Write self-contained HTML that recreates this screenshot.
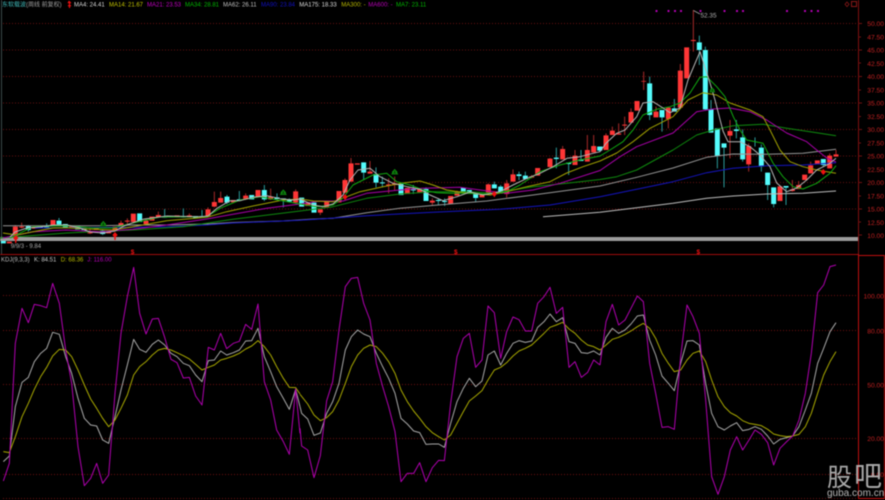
<!DOCTYPE html>
<html lang="zh">
<head>
<meta charset="utf-8">
<title>KDJ</title>
<style>
html,body{margin:0;padding:0;background:#000;width:885px;height:500px;overflow:hidden}
svg{display:block;filter:blur(.45px)}
text{font-family:"Liberation Sans","Noto Sans CJK SC",sans-serif}
.l{fill:none;stroke-width:1;stroke-linejoin:round}
.k{fill:none;stroke-width:3;stroke-linejoin:round}
.rw{fill:none;stroke:#a82828;stroke-width:3}
.cw{fill:none;stroke:#2a9a9a;stroke-width:3}
.rb{fill:none;stroke:#ff3636;stroke-width:15}
.cb{fill:none;stroke:#54fcfc;stroke-width:15}
.ax{fill:#c02020;font-size:6.7px;text-anchor:end}
.t{font-size:6px}
</style>
</head>
<body>
<svg width="885" height="500" viewBox="0 0 885 500" xmlns="http://www.w3.org/2000/svg">
<rect width="885" height="500" fill="#000"/>
<!-- grid -->
<g stroke="#6a1010" stroke-width="1" stroke-dasharray="1 2">
<path d="M3 23.5H858M3 50H858M3 76.5H858M3 103H858M3 129.5H858M3 156H858M3 182.5H858M3 209H858"/>
<path d="M3 295.5H858M3 330.5H858M3 384.5H858M3 438.5H858M3 474.5H858M3 498.5H858" stroke="#701010"/>
</g>
<!-- frame -->
<path d="M1.5 0V254" stroke="#3a4a4a" stroke-width="1"/>
<path d="M858.5 0V254" stroke="#801010" stroke-width="1"/>
<path d="M0 254.5H858" stroke="#a00c0c" stroke-width="1"/>
<path d="M858.5 255.5H884.5V498.5H858.5Z M858.5 254V255" fill="none" stroke="#c01010" stroke-width="1"/>
<path d="M858 23.5h4M858 37h3M858 50h4M858 63h3M858 76.5h4M858 90h3M858 103h4M858 116.5h3M858 129.5h4M858 143h3M858 156h4M858 169.5h3M858 182.5h4M858 196h3M858 209h4M858 222h3M858 235h4" stroke="#701010" stroke-width="1"/>
<!-- gray bar -->
<rect x="0" y="237" width="858" height="4" fill="#9c9c9c"/>

<!-- candles -->
<g transform="matrix(.33333 0 0 .33333 0 130)">
<path class="rw" d="M46 285V318M65 278V295M270 295V312M363 272V290M382 265V285M438 265V285M475 245V262M568 250V262M624 232V258M643 185V232M662 185V218M812 176V210M737 190V210M887 178V220"/>
<path class="cw" d="M85 285V305M140 280V293M177 264V285M308 298V315M494 237V263M550 235V263M606 240V262M681 195V222M718 183V212M793 165V213M831 190V208M850 205V232M868 205V218"/>
<path class="rb" d="M28 335V340M46 290V318M65 290V293M103 290V296M159 270V288M215 287V292M270 303V310M289 295V300M326 305V310M345 290V303M363 279V290M382 272V275M400 251V276M438 272V282M456 260V272M475 255V261M531 256V262M568 256V262M624 238V258M643 216V230M662 204V218M700 210V217M737 197V208M774 180V200M812 200V208M887 184V218"/>
<path class="cb" d="M10 333V340M85 288V300M121 288V293M140 288V292M177 272V283M196 282V292M233 288V298M252 295V300M308 302V312M419 250V276M494 260V263M512 259V262M550 259V262M587 258V265M606 258V261M681 200V218M718 208V212M755 195V208M793 180V208M831 202V207M850 205V208M868 210V215"/>
</g>
<g transform="matrix(.33333 0 0 .33333 300 130)">
<path class="rw" d="M61 238V255M135 145V190M153 84V155M210 93V131M266 145V190M284 140V180M397 205V225M471 182V197M565 160V190M620 150V203M639 118V155M695 135V145M750 84V112M788 48V88M825 60V105M862 15V95M881 15V67"/>
<path class="cw" d="M191 97V150M228 112V172M247 140V172M340 165V192M378 172V213M415 205V225M434 205V228M527 190V217M583 155V175M602 165V190M657 125V150M676 125V147M769 53V115M806 98V135M843 60V93M899 50V65"/>
<path class="rb" d="M23 219V228M61 238V248M80 212V233M117 183V217M135 150V188M153 100V155M172 100V104M210 125V131M266 163V167M284 160V165M322 174V192M359 177V187M397 212V218M452 198V222M471 185V197M546 195V202M565 163V188M620 160V192M639 133V155M695 139V143M713 114V137M750 86V111M788 57V88M825 77V105M862 60V95M881 48V67"/>
<path class="cb" d="M5 203V230M42 218V248M191 97V128M228 132V158M247 157V160M303 162V195M340 178V181M378 177V213M415 210V213M434 213V216M490 173V187M508 180V189M527 190V204M583 163V175M602 170V190M657 133V138M676 137V147M769 83V87M806 98V102M843 88V93M899 50V62"/>
</g>
<g transform="matrix(.33333 0 0 .33333 600 100)">
<path class="rw" d="M18 100V150M37 80V105M56 70V104M74 50V105M93 25V70M390 60V175M446 130V215M540 255V303M577 240V275M596 243V267M632 185V220M689 160V205M708 150V170"/>
<path class="cw" d="M333 0V98M352 85V205M372 130V262M409 60V115M428 88V185M465 112V140M484 133V215M503 218V300M521 262V322M558 258V315M670 177V200"/>
<path class="rb" d="M18 106V150M37 92V105M56 100V104M74 74V77M93 36V68M111 3V32M390 93V107M446 138V193M540 259V303M577 268V273M596 255V267M614 224V240M632 196V220M652 181V193M689 167V205M708 163V170"/>
<path class="cb" d="M0 140V150M333 27V98M352 85V168M372 130V143M409 88V93M428 112V178M484 143V200M503 218V255M521 262V312M558 258V263M670 177V195"/>
</g>
<g transform="matrix(.33333 0 0 .33333 440 0)">
<path class="rw" d="M611 215V270M648 320V352M685 323V385M721 192V323M760 30V155"/>
<path class="cw" d="M629 230V360M666 330V395M703 297V335M778 107V195M796 140V330"/>
<path class="rb" d="M611 243V245M648 335V352M685 323V357M721 212V323M740 142V235M760 120V123"/>
<path class="cb" d="M629 250V345M666 330V352M703 325V335M778 127V150M796 150V328"/>
</g>

<!-- moving averages -->
<polyline class="l" stroke="#bcbcbc" points="543,216.7 600,212.3 636.7,207.7 673,203.3 706.7,198.3 733,196 766.7,194 803,193.3 836,191"/>
<polyline class="l" stroke="#969696" points="3,225.7 100,225.7 133,225 167,225 207,224 233,222.5 283,221 310,219.3 333,218.3 366.7,212.7 400,208.3 450,204 486.7,201 533,195 600,186 636.7,177.3 673,168 706.7,157.3 733,154 766.7,154.3 803,153.3 836,149.3"/>
<polyline class="l" stroke="#1414c0" points="35,228 100,227.5 133,227.3 167,226.7 207,225 233,223 283,221 300,220.3 320,219 366.7,215.7 433,212.3 500,209.3 550,205 600,196.7 636.7,189.3 673,181.7 706.7,172.7 733,168.3 766.7,165.7 803,165 836,162.7"/>
<polyline class="l" stroke="#0e8a0e" points="0,238 66.7,233 133,230 183,226.7 233,219.3 300,211 333,206.7 366.7,198.3 400,194 433,191.7 466.7,191.7 493,193.3 533,186.7 566.7,183.3 600,179.5 616.7,176.7 636.7,170 673,150 696.7,135 713.3,130 733,125.7 763,124.3 786.7,128.3 816.7,132.7 836,135.7"/>
<polyline class="l" stroke="#a800a8" points="3,238 33,231.7 66,230 100,231.7 133,229.3 166.7,225 206.7,219 240,213 266.7,208.3 300,204 320,201 343,201 366.7,193.3 400,190 423,188.3 460,187.3 480,190 506.7,193.3 533,190 560,183.3 600,170.5 620,156.7 636.7,146.7 673,133 696.7,111.7 713,109 730,108 750,111.7 766.7,120 786.7,133 806.7,141.7 816.7,150 826.7,158 836,162"/>
<polyline class="l" stroke="#a0a000" points="3,233 16.7,235 33,231.7 53,228 66.7,227.7 87,229 113,230 133,226.7 166.7,220.7 206.7,217.3 226.7,211.7 253,206 283,200 300,199 313.3,201 333,201.7 346.7,196.7 360,191.7 383,186.7 403,183 420,181 433,185 446.7,190 466.7,193 490,195 506.7,191.7 526.7,186.7 550,181.7 566.7,173 583,166.7 600,161 616.7,153 633,141.7 650,128.3 673,116.7 688,100 703,92.7 716.7,95 730,103 750,110 763,116.7 770,130 780,150 790,161.7 803,166.7 816.7,170 836,173.3"/>
<polyline class="l" stroke="#10a810" points="10,238 33,226.7 66.7,225.7 93,228 113,228 133,223 160,217 206.7,216.7 220,208.3 240,200 260,196.7 300,204 316,206.7 333,205 343,198 353,185 363,180 373,175 386.7,173.3 396.7,181.7 410,185 423,190 436.7,192.7 450,193.3 466.7,193.3 486.7,194 506.7,191.7 520,185 540,171.7 560,165 580,160 600,156 610,150 623,141.7 633,130 643,115 656.7,109.3 670,106.7 680,103 690,93 700,77.3 706.7,76.7 716.7,86.7 725,96.7 733.3,116.7 740,130 746.7,140 763,143.3 773,163 783,176.7 793,186.7 803,189 816.7,183.3 830,173.3 836,165.7"/>
<polyline class="l" stroke="#b4b4b4" points="10,237 15,232 27,228 40,227 53,225 67,225 80,228 90,232 103,233 115,231 124,226 133,222.7 143,219.3 157,217.3 167,216 200,216.7 208,216 217,208.3 230,200.7 240,200.7 253,197.3 267,195.7 280,198.7 293,200 300,199 313,205 323,206.7 333,204 343,195 350,180 358,170 370,168.3 380,176.7 393,183.3 407,186.7 420,189.3 430,195 443,200.7 457,196.7 470,192 483,195 500,191.7 513,185 527,178.3 540,173.3 553,166.7 567,158.3 580,156.7 593,153.3 600,151.7 606,143.3 616.7,133.3 625,130 636.7,116.7 643,103 653,101.7 663,108 670,112.7 680,108 688,80 700,51.7 710,83 715,100 723,131 728,141.7 740,141.7 750,146.7 760,155 770,166.7 776.7,183 786.7,191.7 796.7,188 806.7,180 816.7,170 830,163.3 836,158.3"/>

<!-- buy/sell markers -->
<g fill="#f01010">
<path d="M15.7 235l2.6 3-2.6 3-2.6-3zM115 232l2.6 3-2.6 3-2.6-3zM345 194l2.6 3-2.6 3-2.6-3zM494.300 191l2.600 3-2.600 3-2.600-3zM823.300 169l2.600 3-2.600 3-2.600-3z"/>
<path d="M15 240h1.400v3h-1.400zM114.300 237h1.400v3h-1.400zM494 195h1v2h-1z"/>
</g>
<g fill="#064a06" stroke="#109a10" stroke-width=".8">
<path d="M103.300 221.500l2.200 2.500h-1l1.600 2h-5.600l1.600-2h-1zM283.300 190l2.200 2.500h-1l1.600 2h-5.600l1.600-2h-1zM394.700 169.500l2.200 2.500h-1l1.600 2h-5.600l1.600-2h-1zM712.300 88l1.800 2h-.8l1.300 2h-4.600l1.300-2h-.8z"/>
</g>

<!-- purple dots -->
<g fill="#b000b0">
<rect x="655.500" y="10" width="2" height="2"/><rect x="667.500" y="10" width="2" height="2"/><rect x="674" y="10" width="2" height="2"/><rect x="680" y="10" width="2" height="2"/><rect x="699.500" y="10" width="2" height="2"/><rect x="723.500" y="10" width="2" height="2"/><rect x="736" y="10" width="2" height="2"/><rect x="742" y="10" width="2" height="2"/><rect x="786" y="10" width="2" height="2"/><rect x="804" y="10" width="2" height="2"/><rect x="810.500" y="10" width="2" height="2"/><rect x="817" y="10" width="2" height="2"/>
</g>

<!-- peak label -->
<path d="M693.500 10.500l6.500 3.500" stroke="#a0a0a0" stroke-width=".8" fill="none"/>
<text x="700.500" y="17.500" class="t" fill="#b0b0b0" style="font-size:6.400px">52.35</text>

<!-- top right icons -->
<path d="M847 2l2 2.300-2 2.300-2-2.300z" fill="none" stroke="#8a1818" stroke-width=".8"/>
<rect x="851.500" y="1.500" width="5" height="5" fill="none" stroke="#8a1818" stroke-width="1"/>

<!-- title -->
<text x="2" y="6.500" style="font-size:6px" fill="#3fb6b6">东软载波</text>
<text x="26" y="6.500" style="font-size:6px" fill="#a0a0a0">(周线 前复权)</text>
<path d="M69 .5l2.600 2.600h-1.500v2h1v1.100h-1v1.800h-1.200v-1.800h-1v-1.100h1v-2h-1.500z" fill="#f01010"/>

<!-- MA legend -->
<g class="t">
<text x="74" y="6.700" fill="#d8d8d8" class="t">MA4: 24.41</text>
<text x="109" y="6.700" fill="#c4c400" class="t">MA14: 21.67</text>
<text x="147" y="6.700" fill="#c400c4" class="t">MA21: 23.53</text>
<text x="185" y="6.700" fill="#00b800" class="t">MA34: 28.81</text>
<text x="223" y="6.700" fill="#c0c0c0" class="t">MA62: 26.11</text>
<text x="261" y="6.700" fill="#1010c4" class="t">MA90: 23.84</text>
<text x="299.300" y="6.700" fill="#dcdcdc" class="t">MA175: 18.33</text>
<text x="341.300" y="6.700" fill="#b8b800" class="t">MA300: -</text>
<text x="368.300" y="6.700" fill="#b800b8" class="t">MA600: -</text>
<text x="396" y="6.700" fill="#00b800" class="t">MA7: 23.11</text>
</g>

<!-- low label -->
<text x="10.700" y="248" class="t" fill="#a8a8a8">9/9/3 - 9.84</text>

<!-- year marks -->
<g fill="#f01010" style="font-size:6.500px;font-weight:700" text-anchor="middle">
<text x="132.500" y="254">$</text><text x="455.800" y="254">$</text><text x="698.300" y="254">$</text>
</g>

<!-- KDJ legend -->
<text x="1" y="261.500" class="t" fill="#b8b8b8">KDJ(9,3,3)</text>
<text x="34" y="261.500" class="t" fill="#c8c8c8">K: 84.51</text>
<text x="60.700" y="261.500" class="t" fill="#b8b800">D: 68.36</text>
<text x="87.300" y="261.500" class="t" fill="#b800b8">J: 116.00</text>

<!-- axis labels -->
<g class="ax">
<text x="884" y="26" class="ax">50.00</text><text x="884" y="39.500" class="ax">47.50</text><text x="884" y="52.500" class="ax">45.00</text><text x="884" y="65.800" class="ax">42.50</text><text x="884" y="79" class="ax">40.00</text><text x="884" y="92.500" class="ax">37.50</text><text x="884" y="105.500" class="ax">35.00</text><text x="884" y="119" class="ax">32.50</text><text x="884" y="132" class="ax">30.00</text><text x="884" y="145.300" class="ax">27.50</text><text x="884" y="158.500" class="ax">25.00</text><text x="884" y="172" class="ax">22.50</text><text x="884" y="185" class="ax">20.00</text><text x="884" y="198.500" class="ax">17.50</text><text x="884" y="211.500" class="ax">15.00</text><text x="884" y="225" class="ax">12.50</text><text x="884" y="238" class="ax">10.00</text>
<text x="884" y="298.500" class="ax">100.00</text><text x="884" y="333.500" class="ax">80.00</text><text x="884" y="387.500" class="ax">50.00</text><text x="884" y="441" class="ax">20.00</text><text x="884" y="477" class="ax">0.00</text>
</g>

<!-- KDJ -->
<g transform="matrix(.33333 0 0 .33333 0 250)">
<polyline class="k" stroke="#a8a8a8" points="10,635 28,618 46,470 66,397 85,382 103,335 122,310 140,295 158,247 178,253 197,320 215,370 234,445 253,505 272,525 290,528 308,570 326,580 345,500 363,420 382,345 401,268 419,298 438,307 457,283 475,270 494,285 513,310 531,320 550,340 568,347 587,375 606,395 625,332 643,330 662,303 680,315 700,308 718,300 737,273 755,272 774,235 793,320 812,365 830,410 850,445 868,478 887,418 900,470"/>
<polyline class="k" stroke="#a8a800" points="10,605 28,608 46,560 66,500 85,460 103,418 122,380 140,352 158,318 178,298 197,300 215,320 234,360 253,405 272,447 290,475 308,505 326,530 345,510 363,475 382,435 401,375 419,350 438,335 457,315 475,300 494,295 513,300 531,308 550,317 568,327 587,343 606,360 625,352 643,345 662,330 680,325 700,318 718,310 737,297 755,288 774,272 793,290 812,315 830,350 850,385 868,412 887,413 900,432"/>
<polyline class="k" stroke="#b000b0" points="10,693 28,640 46,280 66,175 85,218 103,163 122,167 140,173 158,100 178,160 197,300 215,400 234,590 253,707 272,685 290,640 308,700 326,675 345,430 363,250 382,140 401,52 419,190 438,252 457,207 475,205 494,262 513,328 531,338 550,384 568,382 587,438 606,465 625,292 643,300 662,250 680,296 700,280 718,274 737,223 755,238 774,162 793,395 812,450 830,540 850,575 868,613 887,417 900,550"/>
</g>
<g transform="matrix(.33333 0 0 .33333 300 250)">
<polyline class="k" stroke="#a8a8a8" points="0,470 5,490 23,507 42,556 61,549 80,490 98,455 117,400 136,300 154,260 173,240 191,252 210,260 229,310 248,350 266,385 285,430 303,505 322,522 341,543 359,548 378,583 397,582 416,582 433,592 452,520 471,455 490,415 508,385 527,410 546,393 564,315 583,303 602,345 620,310 639,280 657,272 676,277 695,273 713,232 732,215 750,192 769,215 788,203 807,275 825,280 844,308 863,310 881,303 900,315"/>
<polyline class="k" stroke="#a8a800" points="0,433 23,462 42,495 61,512 80,503 98,485 117,450 136,400 154,350 173,315 191,295 210,285 229,290 248,310 266,335 285,370 303,420 322,455 341,483 359,505 378,530 397,548 416,560 433,570 452,555 471,520 490,485 508,453 527,438 546,422 564,390 583,360 602,352 620,338 639,318 657,303 676,295 695,285 713,268 732,250 750,232 769,225 788,217 807,237 825,250 844,270 863,285 881,290 900,300"/>
<polyline class="k" stroke="#b000b0" points="0,535 5,588 23,600 42,683 61,617 80,452 98,395 117,240 136,110 154,85 173,82 191,160 210,210 229,340 248,410 266,470 285,545 303,695 322,670 341,670 359,638 378,695 397,653 416,631 433,632 452,460 471,320 490,265 508,250 527,352 546,330 564,168 583,188 602,325 620,245 639,201 657,209 676,243 695,243 713,160 732,140 750,112 769,190 788,172 807,352 825,335 844,382 863,367 881,330 900,345"/>
</g>
<g transform="matrix(.33333 0 0 .33333 600 250)">
<polyline class="k" stroke="#a8a8a8" points="0,315 18,262 37,235 56,250 75,240 93,222 112,198 130,195 149,270 167,315 186,378 205,400 223,422 242,340 261,273 279,272 298,285 317,400 335,490 354,530 373,540 391,528 410,518 428,542 447,538 465,530 484,538 503,558 521,582 540,568 560,563 578,558 597,530 616,480 634,430 653,340 671,295 690,245 708,218"/>
<polyline class="k" stroke="#a8a800" points="0,300 18,285 37,268 56,262 75,253 93,243 112,230 130,220 149,235 167,265 186,310 205,340 223,365 242,360 261,330 279,310 298,303 317,335 335,390 354,440 373,470 391,488 410,498 428,512 447,520 465,523 484,527 503,538 521,552 540,557 560,560 578,558 597,553 616,530 634,490 653,430 671,375 690,335 708,305"/>
<polyline class="k" stroke="#b000b0" points="0,345 18,215 37,163 56,225 75,210 93,175 112,138 130,155 149,340 167,430 186,532 205,530 223,538 242,320 261,165 279,200 298,250 317,450 335,680 354,733 373,680 391,600 410,560 428,600 447,570 465,540 484,553 503,578 521,645 540,595 560,575 578,558 597,510 616,430 634,310 653,128 671,105 690,50 708,45"/>
</g>

<!-- watermark -->
<text x="827" y="486" style="font-family:'Noto Sans CJK SC','WenQuanYi Zen Hei',sans-serif;font-size:25px;font-weight:400" fill="#c4c4c4" fill-opacity=".85">股</text>
<text x="854" y="486" style="font-family:'Noto Sans CJK SC','WenQuanYi Zen Hei',sans-serif;font-size:28px;font-weight:400" fill="#c4c4c4" fill-opacity=".85">吧</text>
<text x="827" y="496" style="font-size:10px" fill="#b4b4b4">guba.com.cn</text>
</svg>
</body>
</html>
